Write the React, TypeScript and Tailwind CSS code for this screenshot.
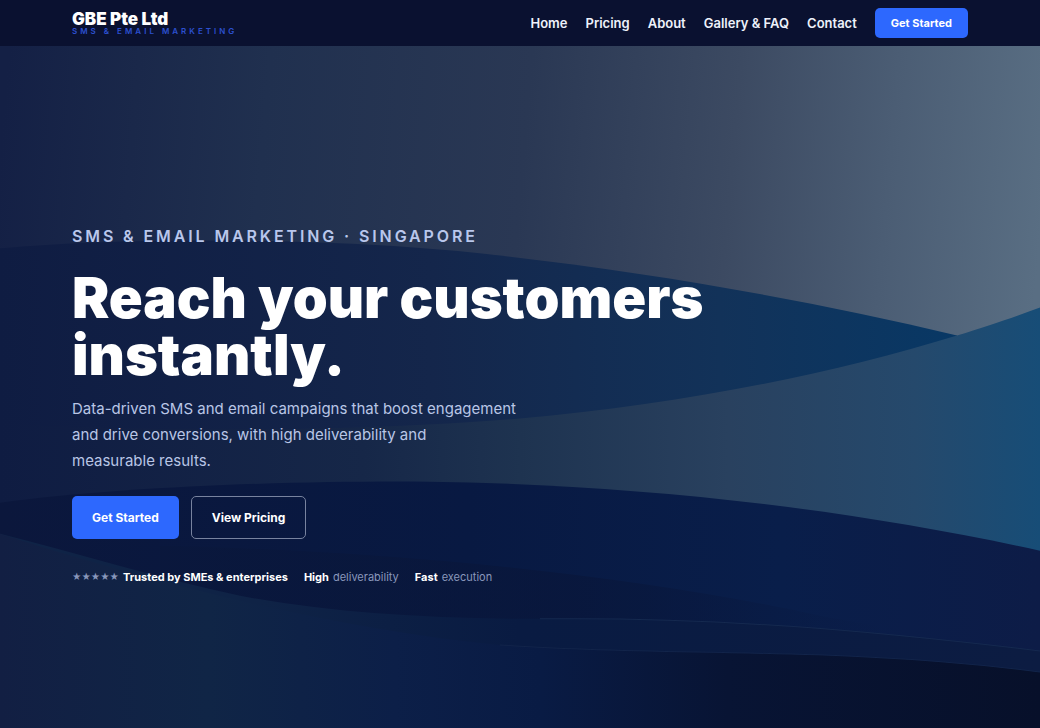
const navLinks = [
  { label: "Home", href: "#home" },
  { label: "Pricing", href: "#pricing" },
  { label: "About", href: "#about" },
  { label: "Gallery & FAQ", href: "#gallery" },
  { label: "Contact", href: "#contact" },
];

function Header() {
  return (
    <header className="relative bg-[#0a1130]">
      <div className="mx-auto flex h-[46px] w-full max-w-[1200px] items-center justify-between px-[72px]">
        <a href="#home" className="flex flex-col">
          <span className="text-[17px] leading-4 font-black text-white">GBE Pte Ltd</span>
          <span className="text-[8px] leading-2 font-semibold tracking-[3px] text-[#2c50cf]">
            SMS &amp; EMAIL MARKETING
          </span>
        </a>

        <nav className="flex items-center gap-[18px]">
          {navLinks.map((link) => (
            <a key={link.label} href={link.href} className="text-[13px] leading-5 font-semibold text-[#eef2fb]">
              {link.label}
            </a>
          ))}
          <button type="button" className="h-[30px] rounded-[5px] bg-[#2d68fe] px-4 text-[11px] font-bold text-white">
            Get Started
          </button>
        </nav>
      </div>
    </header>
  );
}

function Waves() {
  return (
    <svg
      aria-hidden="true"
      viewBox="0 46 1040 682"
      preserveAspectRatio="none"
      className="absolute inset-0 size-full"
    >
      <defs>
        <linearGradient id="sky" gradientUnits="userSpaceOnUse" x1="0" y1="150" x2="1040" y2="240">
          <stop offset="0" stopColor="#142045" />
          <stop offset="0.25" stopColor="#20304f" />
          <stop offset="0.5" stopColor="#2a3854" />
          <stop offset="0.7" stopColor="#3c4a62" />
          <stop offset="0.85" stopColor="#4b5d74" />
          <stop offset="1" stopColor="#596e83" />
        </linearGradient>
        <linearGradient id="lens" gradientUnits="userSpaceOnUse" x1="0" y1="0" x2="960" y2="0">
          <stop offset="0" stopColor="#0f1c42" />
          <stop offset="0.45" stopColor="#14264b" />
          <stop offset="0.75" stopColor="#123259" />
          <stop offset="1" stopColor="#083865" />
        </linearGradient>
        <linearGradient id="sweep" gradientUnits="userSpaceOnUse" x1="0" y1="0" x2="1040" y2="0">
          <stop offset="0" stopColor="#0f1c42" />
          <stop offset="0.35" stopColor="#162748" />
          <stop offset="0.5" stopColor="#1e3350" />
          <stop offset="0.7" stopColor="#29415f" />
          <stop offset="0.88" stopColor="#25496c" />
          <stop offset="1" stopColor="#174d77" />
        </linearGradient>
        <linearGradient id="deep" gradientUnits="userSpaceOnUse" x1="0" y1="0" x2="1040" y2="0">
          <stop offset="0" stopColor="#0b173c" />
          <stop offset="0.45" stopColor="#081942" />
          <stop offset="0.75" stopColor="#091e4a" />
          <stop offset="1" stopColor="#0d1c47" />
        </linearGradient>
        <linearGradient id="band" gradientUnits="userSpaceOnUse" x1="0" y1="0" x2="1040" y2="0">
          <stop offset="0.25" stopColor="#0f2346" />
          <stop offset="0.5" stopColor="#091b42" />
          <stop offset="1" stopColor="#0c1c42" />
        </linearGradient>
        <linearGradient id="floor" gradientUnits="userSpaceOnUse" x1="0" y1="0" x2="1040" y2="0">
          <stop offset="0" stopColor="#121f43" />
          <stop offset="0.2" stopColor="#102546" />
          <stop offset="0.38" stopColor="#0c1f48" />
          <stop offset="0.52" stopColor="#091b44" />
          <stop offset="0.7" stopColor="#081434" />
          <stop offset="1" stopColor="#07102a" />
        </linearGradient>
        <linearGradient id="shade" gradientUnits="userSpaceOnUse" x1="0" y1="0" x2="1040" y2="0">
          <stop offset="0.2" stopColor="#0a173a" stopOpacity="0.5" />
          <stop offset="0.55" stopColor="#09163a" stopOpacity="0.7" />
          <stop offset="0.85" stopColor="#09163a" stopOpacity="0" />
        </linearGradient>
      </defs>

      <rect y="46" width="1040" height="682" fill="url(#sky)" />
      <path
        d="M0 248C130 236 330 238 470 252C640 270 800 298 957 335V430H0Z"
        fill="url(#lens)"
      />
      <path
        d="M0 423C180 432 360 431 520 418C680 404 830 374 957 335C990 325 1016 316 1040 307V728H0Z"
        fill="url(#sweep)"
      />
      <path d="M0 502C130 485 300 480 430 481C640 484 850 508 1040 550V728H0Z" fill="url(#deep)" />
      <path d="M160 545C400 550 640 575 820 615C900 630 980 642 1040 650V728H160Z" fill="url(#shade)" />
      <path
        d="M0 533C80 553 160 578 240 595C330 612 430 618 540 618C720 616 870 630 1040 650V728H0Z"
        fill="url(#band)"
      />
      <path
        d="M0 533C140 578 330 628 500 644C660 656 840 645 1040 671V728H0Z"
        fill="url(#floor)"
      />
      <path d="M540 618C720 616 870 630 1040 650" fill="none" stroke="#15294f" />
      <path d="M500 644C660 656 840 645 1040 671" fill="none" stroke="#12244a" />
    </svg>
  );
}

function Hero() {
  return (
    <section className="relative flex flex-1 flex-col justify-center">
      <Waves />
      <div className="relative mx-auto w-full max-w-[1200px] px-[72px] pt-[180px] pb-[144px]">
        <p className="text-base leading-5 font-semibold tracking-[0.18em] text-[#b9c7ec]">
          SMS &amp; EMAIL MARKETING · SINGAPORE
        </p>
        <h1 className="mt-6 max-w-[720px] text-[56px] leading-[57px] font-black text-white">
          Reach your customers instantly.
        </h1>
        <p className="mt-3 text-[15px] leading-[26px] text-[#b9c6e6]">
          Data-driven SMS and email campaigns that boost engagement
          <br />
          and drive conversions, with high deliverability and
          <br />
          measurable results.
        </p>

        <div className="mt-[22px] flex gap-3">
          <button type="button" className="h-[43px] rounded-[5px] bg-[#2d68fe] px-5 text-xs font-bold text-white">
            Get Started
          </button>
          <button
            type="button"
            className="h-[43px] rounded-[5px] border border-[#78839f] px-5 text-xs font-bold text-white"
          >
            View Pricing
          </button>
        </div>

        <ul className="mt-[30px] flex gap-4 text-[11px] leading-4 text-[#8997bb]">
          <li className="flex gap-1">
            <span aria-label="5 stars" className="text-[9px]">
              ★★★★★
            </span>
            <strong className="font-bold text-white">Trusted by SMEs &amp; enterprises</strong>
          </li>
          <li className="flex gap-1">
            <strong className="font-bold text-white">High</strong>
            <span>deliverability</span>
          </li>
          <li className="flex gap-1">
            <strong className="font-bold text-white">Fast</strong>
            <span>execution</span>
          </li>
        </ul>
      </div>
    </section>
  );
}

export default function App() {
  return (
    <main className="flex min-h-screen flex-col bg-[#0a1130] font-['Inter',sans-serif]">
      <Header />
      <Hero />
    </main>
  );
}
